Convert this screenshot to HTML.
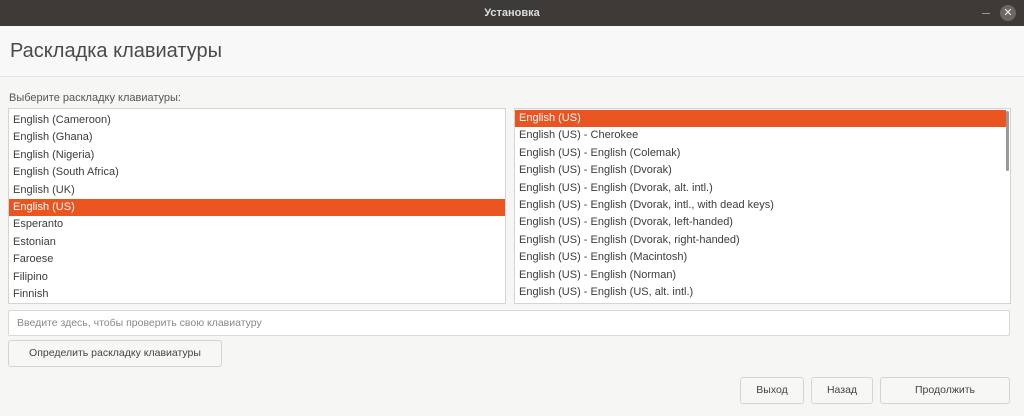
<!DOCTYPE html>
<html><head><meta charset="utf-8"><style>
*{box-sizing:border-box;margin:0;padding:0}
body{width:1024px;height:416px;overflow:hidden;background:#f6f6f5;font-family:"Liberation Sans",sans-serif;font-size:11px;color:#3c3c3c;position:relative}
.tb{position:absolute;left:0;top:0;width:1024px;height:26px;background:#3d3a37;color:#dcdcdc;font-weight:bold;font-size:11px;text-align:center;line-height:26px}
.min{position:absolute;left:982px;top:13px;width:8px;height:1px;background:#999}
.cls{position:absolute;left:1000px;top:5px;width:16px;height:16px;border-radius:50%;background:#6a6764;color:#eee;font-size:11px;line-height:16px;text-align:center;font-weight:normal}
.hdr{position:absolute;left:0;top:26px;width:1024px;height:51px;background:#f8f8f8;border-bottom:1px solid #e4e4e2}
.hdr h1{position:absolute;left:10px;top:14px;font-weight:normal;font-size:20px;color:#4a4a4a}
.lbl{position:absolute;left:9px;top:92px;color:#555}
.list{position:absolute;top:108px;height:196px;background:#fff;border:1px solid #d4d4d2;overflow:hidden}
.row{height:17.4px;line-height:17.4px;padding-left:4px;white-space:nowrap}
.sel{background:#e95420;color:#fff}
.inp{position:absolute;left:8px;top:310px;width:1002px;height:26px;background:#fff;border:1px solid #d8d8d6;border-radius:2px;color:#888;padding-left:8px;line-height:24px;font-size:10.5px}
.btn{position:absolute;height:27px;background:#f7f7f6;border:1px solid #d4d4d2;border-radius:3px;text-align:center;line-height:25px;color:#444;font-size:10.5px}
</style></head><body>
<div class="tb">Установка<div class="min"></div><div class="cls">✕</div></div>
<div class="hdr"><h1>Раскладка клавиатуры</h1></div>
<div class="lbl">Выберите раскладку клавиатуры:</div>
<div class="list" style="left:8px;width:498px;padding-top:3px">
<div class="row">English (Cameroon)</div><div class="row">English (Ghana)</div><div class="row">English (Nigeria)</div><div class="row">English (South Africa)</div><div class="row">English (UK)</div><div class="row sel">English (US)</div><div class="row">Esperanto</div><div class="row">Estonian</div><div class="row">Faroese</div><div class="row">Filipino</div><div class="row">Finnish</div>
</div>
<div class="list" style="left:514px;width:497px;padding-top:1px">
<div class="row sel" style="margin-right:4px">English (US)</div><div class="row">English (US) - Cherokee</div><div class="row">English (US) - English (Colemak)</div><div class="row">English (US) - English (Dvorak)</div><div class="row">English (US) - English (Dvorak, alt. intl.)</div><div class="row">English (US) - English (Dvorak, intl., with dead keys)</div><div class="row">English (US) - English (Dvorak, left-handed)</div><div class="row">English (US) - English (Dvorak, right-handed)</div><div class="row">English (US) - English (Macintosh)</div><div class="row">English (US) - English (Norman)</div><div class="row">English (US) - English (US, alt. intl.)</div>
<div style="position:absolute;right:1px;top:2px;width:3px;height:60px;background:#999;border-radius:2px"></div>
</div>
<div class="inp">Введите здесь, чтобы проверить свою клавиатуру</div>
<div class="btn" style="left:8px;top:340px;width:214px">Определить раскладку клавиатуры</div>
<div class="btn" style="left:740px;top:377px;width:64px">Выход</div>
<div class="btn" style="left:811px;top:377px;width:62px">Назад</div>
<div class="btn" style="left:880px;top:377px;width:130px">Продолжить</div>
</body></html>
